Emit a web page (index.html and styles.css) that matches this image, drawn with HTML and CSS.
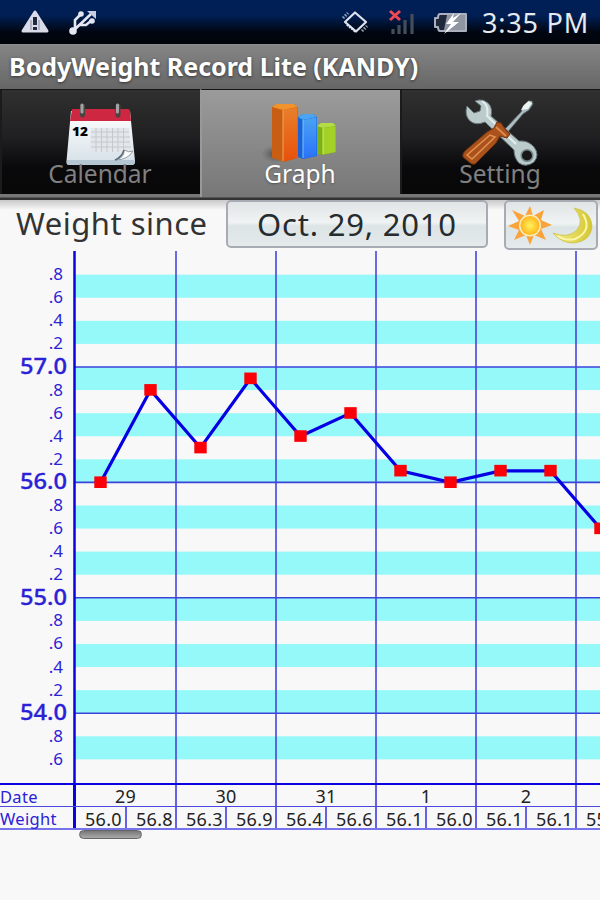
FILE: index.html
```html
<!DOCTYPE html>
<html lang="en">
<head>
    <meta charset="UTF-8">
    <meta name="viewport" content="width=device-width, initial-scale=1.0">
    <title>BodyWeight Record Lite (KANDY)</title>
    <link rel="stylesheet" href="styles.css">
</head>
<body>
    <div class="status-bar">
        <svg class="status-left" width="110" height="44" viewBox="0 0 110 44">
            <path d="M35 12 L47 31 H23 Z" fill="#d9dbe8" stroke="#d9dbe8" stroke-width="3" stroke-linejoin="round"/>
            <path d="M35 17 V25 M35 27 V30" stroke="#20283c" stroke-width="4"/>
            <path d="M31 20 V30 M39 20 V30" stroke="#a3a7ba" stroke-width="1.500"/>
            <g fill="none" stroke="#e4e6f2" stroke-width="2.600">
                <path d="M73 31 L91 14 M75 28 V20 L81 14 M79 25 H86 L92 20"/>
                <circle cx="81" cy="14" r="1.5"/>
                <circle cx="92" cy="21" r="1.5"/>
            </g>
            <circle cx="73" cy="31" r="3.8" fill="#e4e6f2"/>
            <path d="M87 11 H96 V19 Z" fill="#c8cde4"/>
        </svg>
        <div class="status-right">
            <svg width="134" height="44" viewBox="340 0 134 44">
                <g fill="none" stroke="#dfe3ee" stroke-linejoin="round">
                    <path d="M355 12.500 L366 22 L356 31.500 L345 22 Z" stroke-width="2.200"/>
                    <path d="M347 24.500 L356 32" stroke-width="2.500" stroke-dasharray="2 1"/>
                    <path d="M343 18 L348 13 M362 31 L367 26" stroke-width="3" stroke-dasharray="1.500 1.500" opacity=".7"/>
                </g>
                <path d="M393 29 V34 M399 25 V34 M405 20 V34 M412 14 V34" stroke="#454d5b" stroke-width="3.200"/>
                <path d="M390 11 L400 20 M400 11 L390 20" stroke="#f24854" stroke-width="3"/>
                <path d="M440 14 H466 V31 H440 Q438 31 438 27 H435 V18 H438 Q438 14 440 14 Z" fill="#20293a" stroke="#aab0bd" stroke-width="2" stroke-linejoin="round"/>
                <path d="M447 15 H465 V30 H444 Z" fill="#9096a1"/>
                <path d="M454 13 L446 24 H451 L444 34 L459 22 H453 L461 13 L453 18 Z" fill="#fff"/>
            </svg>
            <span class="clock">3:35 PM</span>
        </div>
    </div>

    <div class="title-bar"><span>BodyWeight Record Lite (KANDY)</span></div>

    <div class="tabs">
        <div class="tab">
            <svg class="tab-icon" viewBox="60 95 80 73">
                <defs>
                    <linearGradient id="paper" x1="0" y1="0" x2="0" y2="1">
                        <stop offset="0" stop-color="#fff"/>
                        <stop offset="1" stop-color="#d5e0e8"/>
                    </linearGradient>
                </defs>
                <path d="M71 111 H130 L135 161 Q135 165 132 165 H69 Q66 165 66.500 161 Z" fill="url(#paper)"/>
                <path d="M67 160 H134 L135 163 Q134 165 131 165 H70 Q66 165 67 160" fill="#b4c6d2"/>
                <path d="M72 109.500 Q72 109 73 109 H128 Q129.500 109 130 111 L131 121 H70 Z" fill="#cd2742"/>
                <path d="M91 128 H129 L131 152 H90 Z" fill="#e3e6ea"/>
                <path d="M96 128 V152 M101.500 128 V152 M107 128 V152 M112.500 128 V152 M118 128 V152 M123.500 128 V152 M91 132 H129 M91 137 H130 M91 142 H130 M91 147 H131" stroke="#c5c9cf" stroke-width="1"/>
                <path d="M115 160 Q125 158 124 150 Q129 153 133 151 Q128 160 115 160" fill="#fff" stroke="#94a0aa" stroke-width="1"/>
                <path d="M115 160 Q122 157 124 150" fill="none" stroke="#596b79" stroke-width="1.500"/>
                <path d="M82.500 106 V115 M118 106 V115" stroke="#4b4242" stroke-width="5" stroke-linecap="round"/>
                <path d="M82 105 V112 M117.500 105 V112" stroke="#a3a3a3" stroke-width="3" stroke-linecap="round"/>
                <text x="72" y="136" class="calendar-day" textLength="16" lengthAdjust="spacingAndGlyphs">12</text>
            </svg>
            <span>Calendar</span>
        </div>
        <div class="tab active">
            <svg class="tab-icon" viewBox="260 95 80 73">
                <defs>
                    <linearGradient id="orange" x1="0" y1="0" x2="0" y2="1"><stop offset="0" stop-color="#e8802a"/><stop offset="1" stop-color="#e8500c"/></linearGradient>
                    <linearGradient id="blue" x1="0" y1="0" x2="0" y2="1"><stop offset="0" stop-color="#4ba2f3"/><stop offset="1" stop-color="#2a72fb"/></linearGradient>
                    <radialGradient id="shade"><stop offset="0" stop-color="#333" stop-opacity=".75"/><stop offset="1" stop-color="#555" stop-opacity="0"/></radialGradient>
                </defs>
                <ellipse cx="276" cy="154" rx="15" ry="9" fill="url(#shade)"/>
                <path d="M317 126 L321 123 H333 L336 126 V152 L323 155 L317 154 Z" fill="#7fb014"/>
                <path d="M317 126 L321 123 H333 L336 126 L323 128 Z" fill="#b4dc45"/>
                <path d="M323 128 L335.500 126.500 V152 L323 154.500 Z" fill="#a4d127"/>
                <path d="M323 128 V154" stroke="#c9ec68" stroke-width="1"/>
                <path d="M298 117 L303 114 H313 L317 117 V156 L303 159 L298 157 Z" fill="#1764d9"/>
                <path d="M298 117 L303 114 H313 L317 117 L303 120 Z" fill="#4ca5f3"/>
                <path d="M303 120 L316.500 117.500 V156 L303 158.500 Z" fill="url(#blue)"/>
                <path d="M303 120 V158" stroke="#7cc0fb" stroke-width="1"/>
                <path d="M272 107 L276 104 H294 L297.500 107 V158 L284 162 L272 158 Z" fill="#c85d14"/>
                <path d="M272 107 L276 104 H294 L297.500 107 L283 110 Z" fill="#f0932c"/>
                <path d="M283 110 L297 107.500 V158 L283 161.500 Z" fill="url(#orange)"/>
                <path d="M283 110 V161" stroke="#f5a355" stroke-width="1"/>
            </svg>
            <span>Graph</span>
        </div>
        <div class="tab">
            <svg class="tab-icon" viewBox="460 95 80 73">
                <path d="M504 130 L521 112 L523 106 L528 101 L532 101 L533 104 L529 110 L523 114 L507 133 Z" fill="#aebdbf" stroke="#526064" stroke-width="1"/>
                <path d="M521 110 L524 105 L529 101 L532 103 L528 109 Z" fill="#edf5f3"/>
                <path d="M475 101 Q482 98 488 103 Q493 108 491 116 L519 141 Q528 140 534 147 Q540 155 534 162 Q526 168 519 163 Q514 158 514 150 L485 122 Q476 126 470 121 Q464 115 467 106 L474 113 L480 111 L481 106 Z" fill="#bbcaca" stroke="#647276" stroke-width="1"/>
                <path d="M482 101 Q489 105 487 116 L516 144" fill="none" stroke="#e4eeee" stroke-width="2"/>
                <circle cx="527" cy="155.500" r="5.800" fill="#171717" stroke="#75898e" stroke-width="1.500"/>
                <path d="M494 128 L497 122 L501 123 L505 129 L510 134 L507 138 L500 136 L496 143 L475 164 Q472 165 469 162 L463 157 Q462 154 465 151 L487 132 Z" fill="#a9521c" stroke="#71300d" stroke-width="1"/>
                <path d="M467 155 L490 135 L495 137 L472 159 Z" fill="none" stroke="#e49152" stroke-width="1.500"/>
                <path d="M496 127 L506 136" stroke="#e18a4b" stroke-width="2"/>
            </svg>
            <span>Setting</span>
        </div>
    </div>

    <div class="toolbar">
        <span class="since">Weight since</span>
        <button class="date-button"><span>Oct. 29, 2010</span></button>
        <button class="time-button">
            <svg width="90" height="46" viewBox="506 202 90 46">
                <defs>
                    <radialGradient id="sun"><stop offset="0" stop-color="#fff45d"/><stop offset="1" stop-color="#ffb51f"/></radialGradient>
                    <linearGradient id="moon"><stop offset="0" stop-color="#f4ee83"/><stop offset="1" stop-color="#d5c632"/></linearGradient>
                </defs>
                <path d="M530 206 L533 216 L544 210 L541 220 L552 225 L541 229 L546 240 L534 235 L530 245 L526 235 L514 240 L519 230 L508 226 L519 221 L512 210 L525 216 Z" fill="#faa33b"/>
                <circle cx="530" cy="225.500" r="11" fill="#f7eeb8"/>
                <circle cx="530" cy="225.500" r="9.500" fill="url(#sun)"/>
                <path d="M574 208 Q591 211 592 226 Q591 241 574 243 Q561 243 553 233 Q568 239 577 230 Q585 220 574 208 Z" fill="url(#moon)" stroke="#c9c047" stroke-width=".8"/>
                <path d="M583 214 Q593 231 575 239 Q565 241 558 236" fill="none" stroke="#fbf6aa" stroke-width="2"/>
            </svg>
        </button>
    </div>

    <svg class="chart" id="chart" width="600" height="532" viewBox="0 251 600 532"></svg>

    <div class="record">
        <div class="row dates">
            <span class="head">Date</span>
            <span>29</span><span>30</span><span>31</span><span>1</span><span>2</span><span></span>
        </div>
        <div class="row weights">
            <span class="head">Weight</span>
            <span>56.0</span><span>56.8</span><span>56.3</span><span>56.9</span><span>56.4</span><span>56.6</span><span>56.1</span><span>56.0</span><span>56.1</span><span>56.1</span><span>55.6</span>
        </div>
    </div>
    <div class="scroll-thumb"></div>

    <script src="chart.js"></script>
</body>
</html>
```
FILE: styles.css
```css
* {
    box-sizing: border-box;
}
body {
    margin: 0;
    width: 600px;
    height: 900px;
    overflow: hidden;
    background-color: #f8f8f8;
    font-family: 'Noto Sans', 'Open Sans', sans-serif;
}
.status-bar {
    height: 44px;
    display: flex;
    justify-content: space-between;
    background: linear-gradient(#002058 0, #001e53 16px, #000611 32px, #00030a 100%);
}
.status-right {
    display: flex;
}
.clock {
    width: 126px;
    padding-left: 8px;
    font-size: 27px;
    line-height: 46px;
    letter-spacing: 0.8px;
    color: #e6e9ef;
    white-space: nowrap;
}
.title-bar {
    height: 45px;
    padding-left: 9px;
    border-top: 1px solid #8e8e8e;
    background: linear-gradient(#858585, #666);
    color: #fff;
    font-size: 25px;
    font-weight: bold;
    line-height: 42px;
    text-shadow: 0 1px 3px #333;
    white-space: nowrap;
}
.tabs {
    height: 111px;
    display: flex;
    padding-bottom: 6px;
    background: linear-gradient(#777 0, #777 108px, #333 109px, #333 111px);
}
.tab {
    width: 200px;
    height: 105px;
    display: flex;
    flex-direction: column;
    align-items: center;
    padding: 5px 2px 0 0;
    background: linear-gradient(#303030, #202022 45%, #09090b 75%, #080808);
    border-top: 1px solid #151515;
    border-left: 2px solid #1b1b1b;
    color: #808080;
    font-size: 24.5px;
}
.tab.active {
    height: 108px;
    background: linear-gradient(#9b9b9b, #777);
    border-left-color: #999;
    color: #fff;
    text-shadow: 0 1px 2px #555;
}
.tab-icon {
    width: 80px;
    height: 73px;
    flex: none;
}
.tab span {
    margin-top: -9px;
    line-height: 30px;
}
.calendar-day {
    font-size: 13px;
    font-weight: 900;
}
.toolbar {
    height: 51px;
    display: flex;
    align-items: flex-start;
    background: linear-gradient(#c9c9c9, #f8f8f8 10px);
    color: #333;
    font-size: 31px;
    letter-spacing: 0.5px;
}
.since {
    width: 226px;
    padding-left: 16px;
    line-height: 47px;
    white-space: nowrap;
}
.date-button,
.time-button {
    padding: 0;
    border: 2px solid #a9abb4;
    border-radius: 5px;
    background: linear-gradient(#e0e4e4, #f0f3f3 46%, #dce4e5 55%, #e5eaeb);
    font: inherit;
    color: #262b2d;
}
.date-button {
    width: 262px;
    height: 48px;
    line-height: 42px;
    letter-spacing: 0.8px;
    white-space: nowrap;
}
.time-button {
    width: 94px;
    height: 50px;
    margin-left: 16px;
}
.time-button svg {
    display: block;
}
.chart {
    display: block;
}
.chart text {
    fill: #2b22d6;
    text-anchor: end;
}
.chart .major {
    font-size: 22px;
    font-weight: 500;
    stroke: #2b22d6;
    stroke-width: .3px;
}
.chart .minor {
    font-size: 17px;
}
.band {
    fill: #96f9f9;
}
.whole-line {
    stroke: #3b43d8;
    stroke-width: 1.6;
}
.day-line {
    stroke: #4644dc;
    stroke-width: 1.6;
}
.axis {
    stroke: #0c02df;
    stroke-width: 2.5;
}
.weight-line {
    fill: none;
    stroke: #0500e3;
    stroke-width: 3.2;
}
.point {
    fill: #fb0007;
}
.record {
    height: 47px;
    color: #222;
    border-top: 2px solid #0c02df;
    border-bottom: 2px solid #7773ec;
}
.row {
    display: grid;
    height: 21px;
    font-size: 18px;
    letter-spacing: 0.3px;
    white-space: nowrap;
}
.dates {
    grid-template-columns: 76px 101px repeat(5, 100px);
    line-height: 23px;
    text-align: center;
}
.weights {
    height: 22px;
    grid-template-columns: 76px 51px repeat(10, 50px);
    border-top: 1px solid #4c48e2;
    line-height: 24px;
}
.row span {
    height: 21px;
    border-right: 2px solid #6561e6;
}
.weights span {
    padding-left: 9px;
}
.row .head {
    padding-left: 0;
    border-right: 3px solid #0c02df;
    color: #2b22d6;
    font-size: 16.5px;
    text-align: left;
}
.scroll-thumb {
    width: 63px;
    height: 9px;
    margin: 0 0 0 79px;
    border: 1px solid #666;
    border-radius: 5px;
    background: linear-gradient(#777, #aaa);
}
```
FILE: chart.js
```js
const weights = [56.0, 56.8, 56.3, 56.9, 56.4, 56.6, 56.1, 56.0, 56.1, 56.1, 55.6];
const top57 = 367;
const unit = 115.4;
const yOf = weight => top57 + (57 - weight) * unit;

let markup = '';

for (let w = 57.8; w > 53.7; w -= 0.4) {
    markup += `<rect class="band" x="75" y="${yOf(w)}" width="525" height="${unit * 0.2}"/>`;
}
for (let w = 57; w >= 54; w--) {
    markup += `<path class="whole-line" d="M75 ${yOf(w)} H600"/>`;
}
for (let x = 176; x < 600; x += 100) {
    markup += `<path class="day-line" d="M${x} 251 V783"/>`;
}
markup += '<path class="axis" d="M74.5 251 V783"/>';

// labels every 0.2, whole numbers are bigger
for (let i = 0; i <= 21; i++) {
    const tenths = 578 - i * 2;
    const y = yOf(tenths / 10);
    if (tenths % 10 === 0) {
        markup += `<text class="major" x="67" y="${y + 7}" textLength="47" lengthAdjust="spacingAndGlyphs">${tenths / 10}.0</text>`;
    } else {
        markup += `<text class="minor" x="63" y="${y + 5.5}">.${tenths % 10}</text>`;
    }
}

const points = weights.map((w, i) => [100.5 + i * 50, yOf(w)]);
markup += `<polyline class="weight-line" points="${points.join(' ')}"/>`;
points.forEach(([x, y]) => {
    markup += `<rect class="point" x="${x - 6.2}" y="${y - 6}" width="12.4" height="11.6"/>`;
});

document.getElementById('chart').innerHTML = markup;
```
